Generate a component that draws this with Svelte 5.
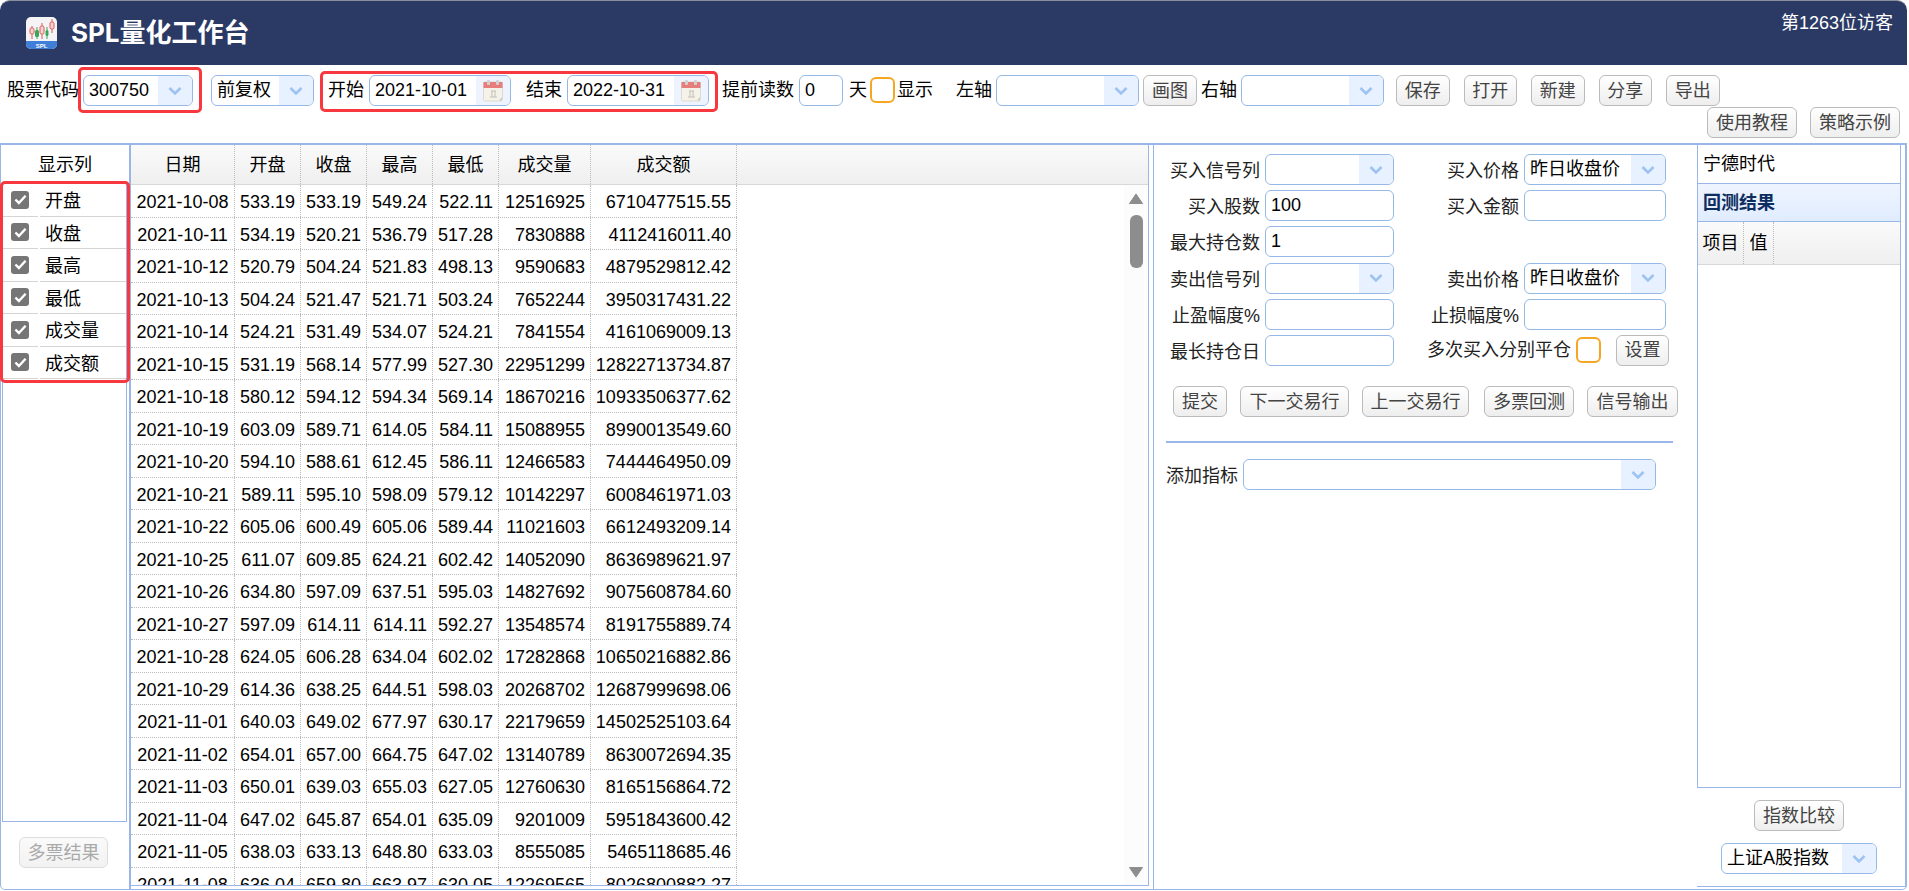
<script>
  const rows = [
    ['2021-10-08','533.19','533.19','549.24','522.11','12516925','6710477515.55'],
    ['2021-10-11','534.19','520.21','536.79','517.28','7830888','4112416011.40'],
    ['2021-10-12','520.79','504.24','521.83','498.13','9590683','4879529812.42'],
    ['2021-10-13','504.24','521.47','521.71','503.24','7652244','3950317431.22'],
    ['2021-10-14','524.21','531.49','534.07','524.21','7841554','4161069009.13'],
    ['2021-10-15','531.19','568.14','577.99','527.30','22951299','12822713734.87'],
    ['2021-10-18','580.12','594.12','594.34','569.14','18670216','10933506377.62'],
    ['2021-10-19','603.09','589.71','614.05','584.11','15088955','8990013549.60'],
    ['2021-10-20','594.10','588.61','612.45','586.11','12466583','7444464950.09'],
    ['2021-10-21','589.11','595.10','598.09','579.12','10142297','6008461971.03'],
    ['2021-10-22','605.06','600.49','605.06','589.44','11021603','6612493209.14'],
    ['2021-10-25','611.07','609.85','624.21','602.42','14052090','8636989621.97'],
    ['2021-10-26','634.80','597.09','637.51','595.03','14827692','9075608784.60'],
    ['2021-10-27','597.09','614.11','614.11','592.27','13548574','8191755889.74'],
    ['2021-10-28','624.05','606.28','634.04','602.02','17282868','10650216882.86'],
    ['2021-10-29','614.36','638.25','644.51','598.03','20268702','12687999698.06'],
    ['2021-11-01','640.03','649.02','677.97','630.17','22179659','14502525103.64'],
    ['2021-11-02','654.01','657.00','664.75','647.02','13140789','8630072694.35'],
    ['2021-11-03','650.01','639.03','655.03','627.05','12760630','8165156864.72'],
    ['2021-11-04','647.02','645.87','654.01','635.09','9201009','5951843600.42'],
    ['2021-11-05','638.03','633.13','648.80','633.03','8555085','5465118685.46'],
    ['2021-11-08','636.04','659.80','663.97','630.05','12269565','8026800882.27'],
  ];
  const heads = ['日期','开盘','收盘','最高','最低','成交量','成交额'];
  const cols = ['开盘','收盘','最高','最低','成交量','成交额'];
</script>

{#snippet arrow()}
  <span class="arrow"><svg width="16" height="10" viewBox="0 0 16 10"><path d="M2.5 2 L8 7.5 L13.5 2" fill="none" stroke="#9cc3f2" stroke-width="2.6"/></svg></span>
{/snippet}

{#snippet cal()}
  <span class="arrow cal"><svg width="20" height="22" viewBox="0 0 20 22">
    <rect x="0.5" y="2" width="19" height="19" rx="1.5" fill="#f5f2ea" stroke="#dedad0"/>
    <rect x="0.5" y="2" width="19" height="6" fill="#e67f7c"/>
    <rect x="4" y="0" width="3" height="5" rx="1" fill="#d2d2d2"/>
    <rect x="13" y="0" width="3" height="5" rx="1" fill="#d2d2d2"/>
    <path d="M8 11h5M9 11v6M12 11v6M7 17h7" stroke="#c4c0b8" stroke-width="1" fill="none"/>
    <path d="M19 17l-3 3.5h3z" fill="#cfcbc2"/>
  </svg></span>
{/snippet}

{#snippet check()}
  <span class="cb"><svg width="13" height="11" viewBox="0 0 12 10"><path d="M1.3 5 L4.5 8.2 L10.7 1.5" fill="none" stroke="#fff" stroke-width="2.2"/></svg></span>
{/snippet}

<div class="page">
  <header class="top">
    <svg class="logo" width="31" height="32" viewBox="0 0 31 32">
      <rect width="31" height="32" rx="5" fill="#f4f4f6"/>
      <path d="M0 24h31v3a5 5 0 0 1-5 5H5a5 5 0 0 1-5-5z" fill="#3f7fd8"/>
      <path d="M6 9v13M16 6v16M26 2v14" stroke="#e05656" stroke-width="1"/>
      <path d="M11 10v12M21 10v12" stroke="#37a85a" stroke-width="1"/>
      <rect x="4" y="11" width="4" height="6" rx="1.5" fill="#f7d4d4" stroke="#e05656"/>
      <rect x="9" y="13" width="4" height="7" rx="1.5" fill="#37a85a"/>
      <rect x="14" y="9" width="4" height="8" rx="1.5" fill="#f7d4d4" stroke="#e05656"/>
      <rect x="19.5" y="13" width="3" height="6" rx="1.5" fill="#37a85a"/>
      <rect x="24" y="5" width="4" height="7" rx="1.5" fill="#f7d4d4" stroke="#e05656"/>
      <text x="15.5" y="30.5" font-size="6" font-weight="700" fill="#fff" text-anchor="middle" font-family="Liberation Sans">SPL</text>
    </svg>
    <h1>SPL量化工作台</h1>
    <span class="visitor">第1263位访客</span>
  </header>

  <div class="bar">
    <div class="row">
      <span class="l l-code">股票代码</span>
      <div class="in code"><span class="v">300750</span>{@render arrow()}</div>
      <div class="in adj"><span class="v low">前复权</span>{@render arrow()}</div>
      <span class="l l-start">开始</span>
      <div class="in date"><span class="v">2021-10-01</span>{@render cal()}</div>
      <span class="l l-end">结束</span>
      <div class="in date"><span class="v">2022-10-31</span>{@render cal()}</div>
      <span class="l l-read">提前读数</span>
      <div class="in days"><span class="v">0</span></div>
      <span class="l l-day">天</span>
      <span class="sq sq-show"></span>
      <span class="l l-show">显示</span>
      <span class="l l-left">左轴</span>
      <div class="in axis"><span class="v"></span>{@render arrow()}</div>
      <button class="b-draw">画图</button>
      <span class="l l-right">右轴</span>
      <div class="in axis"><span class="v"></span>{@render arrow()}</div>
      <button class="b-tool b-first">保存</button>
      <button class="b-tool">打开</button>
      <button class="b-tool">新建</button>
      <button class="b-tool">分享</button>
      <button class="b-tool">导出</button>
    </div>
    <div class="row r2">
      <button class="b-four">使用教程</button>
      <button class="b-four b-gap">策略示例</button>
    </div>
  </div>

  <main class="main">
    <aside class="left">
      <div class="lhead">显示列</div>
      <div class="llist">
        {#each cols as c}
          <div class="lrow">{@render check()}<span class="lname">{c}</span></div>
        {/each}
      </div>
      <div class="lfoot"><button class="dis">多票结果</button></div>
    </aside>

    <section class="grid">
      <div class="ghead">
        {#each heads as h, i}<div class="c c{i}">{h}</div>{/each}
      </div>
      <div class="gbody">
        {#each rows as r}
          <div class="grow">
            {#each r as v, i}<div class="c c{i}">{v}</div>{/each}
          </div>
        {/each}
        <div class="sb">
          <svg class="up" width="14" height="11" viewBox="0 0 14 11"><path d="M7 1 L13.5 10.5 H0.5 Z" fill="#8d8d8d" stroke="#8d8d8d" stroke-linejoin="round"/></svg>
          <div class="thumb"></div>
          <svg class="down" width="14" height="11" viewBox="0 0 14 11"><path d="M7 10 L13.5 .5 H0.5 Z" fill="#8d8d8d" stroke="#8d8d8d" stroke-linejoin="round"/></svg>
        </div>
      </div>
    </section>

    <section class="form">
      <div class="frow">
        <span class="fl">买入信号列</span><div class="in w1"><span class="v"></span>{@render arrow()}</div>
        <span class="fr">买入价格</span><div class="in w2"><span class="v">昨日收盘价</span>{@render arrow()}</div>
      </div>
      <div class="frow">
        <span class="fl">买入股数</span><div class="in w1"><span class="v">100</span></div>
        <span class="fr">买入金额</span><div class="in w2"><span class="v"></span></div>
      </div>
      <div class="frow">
        <span class="fl">最大持仓数</span><div class="in w1"><span class="v">1</span></div>
      </div>
      <div class="frow">
        <span class="fl">卖出信号列</span><div class="in w1"><span class="v"></span>{@render arrow()}</div>
        <span class="fr">卖出价格</span><div class="in w2"><span class="v">昨日收盘价</span>{@render arrow()}</div>
      </div>
      <div class="frow">
        <span class="fl">止盈幅度%</span><div class="in w1"><span class="v"></span></div>
        <span class="fr">止损幅度%</span><div class="in w2"><span class="v"></span></div>
      </div>
      <div class="frow">
        <span class="fl">最长持仓日</span><div class="in w1"><span class="v"></span></div>
        <span class="multi">多次买入分别平仓</span><span class="sq sq-multi"></span>
        <button class="b-set">设置</button>
      </div>
      <div class="acts">
        <button class="a1">提交</button>
        <button class="a2">下一交易行</button>
        <button class="a3">上一交易行</button>
        <button class="a4">多票回测</button>
        <button class="a5">信号输出</button>
      </div>
      <hr />
      <div class="add">
        <span class="addl">添加指标</span>
        <div class="in addin"><span class="v"></span>{@render arrow()}</div>
      </div>
    </section>

    <aside class="right">
      <div class="rbox">
        <div class="rname">宁德时代</div>
        <div class="rtitle">回测结果</div>
        <div class="rhead"><div class="rc1">项目</div><div class="rc2">值</div></div>
      </div>
      <div class="rfoot">
        <button class="b-four">指数比较</button>
        <div class="in index"><span class="v">上证A股指数</span>{@render arrow()}</div>
      </div>
    </aside>
  </main>

  <div class="mark m1"></div>
  <div class="mark m2"></div>
  <div class="mark m3"></div>
</div>

<style>
  :global(body) { margin: 0; background: #fff; }
  .page {
    position: relative; width: 1907px; height: 890px;
    font: 18px/1 "Liberation Sans", "Noto Sans CJK SC", sans-serif; color: #000; overflow: hidden;
  }
  .top {
    height: 65px; background: #2b3a65; border-radius: 10px 10px 0 0; border-top: 1px solid #8b8f9c;
    box-sizing: border-box; display: flex; align-items: center; padding-left: 26px; position: relative;
  }
  .logo { flex: none; }
  h1 { margin: 0 0 0 14px; font: 700 26px/1 "Inter", "Noto Sans CJK SC", sans-serif; color: #fff; }
  .visitor { position: absolute; right: 14px; top: 13px; color: #fff; }

  .bar { height: 78px; box-sizing: border-box; padding: 10px 7px 0 7px; }
  .row { display: flex; align-items: flex-start; height: 32px; }
  .r2 { justify-content: flex-end; height: 31px; }
  .l { flex: none; line-height: 31px; white-space: nowrap; }
  .l-code { width: 71px; }
  .code { margin-left: 5px; width: 110px; }
  .adj { margin-left: 18px; width: 103px; }
  .low { line-height: 31px; }
  .l-start { margin-left: 14px; width: 36px; }
  .date { margin-left: 5px; width: 142px; }
  .l-end { margin-left: 15px; width: 36px; }
  .l-read { margin-left: 13px; width: 72px; }
  .days { margin-left: 5px; width: 44px; }
  .l-day { margin-left: 6px; width: 18px; }
  .sq-show { margin-left: 3px; }
  .l-show { margin-left: 2px; width: 36px; }
  .l-left { margin-left: 23px; width: 36px; }
  .axis { margin-left: 4px; width: 143px; }
  .b-draw { margin-left: 4px; width: 54px; }
  .l-right { margin-left: 4px; width: 36px; }
  .b-tool { margin-left: 14px; width: 53.5px; }
  .b-first { margin-left: 12px; }
  .b-four { width: 90px; }
  .b-gap { margin-left: 13px; }

  .in {
    flex: none; height: 31px; box-sizing: border-box; border: 1px solid #95b8e7; border-radius: 6px;
    display: flex; align-items: stretch; overflow: hidden; background: #fff;
  }
  .v { flex: 1; padding-left: 5px; line-height: 29px; white-space: nowrap; overflow: hidden; }
  .arrow { flex: none; width: 34px; background: #e8f1ff; display: flex; align-items: center; justify-content: center; }
  .cal { background: #eef4ff; }
  .sq { flex: none; width: 25px; height: 26px; box-sizing: border-box; border: 2px solid #f5a623; border-radius: 6px; margin-top: 2px; }

  button {
    flex: none; height: 31px; padding: 0; box-sizing: border-box; border: 1px solid #bbb; border-radius: 6px;
    background: linear-gradient(#ffffff, #eeeeee); color: #444;
    font: 18px/1 "Liberation Sans", "Noto Sans CJK SC", sans-serif;
  }
  .dis { width: 89px; color: #aaa; border-color: #ddd; background: linear-gradient(#fafafa, #f2f2f2); }

  .main {
    height: 747px; box-sizing: border-box; border: solid #9ab6e8; border-width: 2px 1px 1px 1px; border-radius: 0 0 5px 5px;
    display: flex;
  }
  .left { width: 128px; flex: none; border-right: 2px solid #9ab6e8; display: flex; flex-direction: column; }
  .lhead { height: 39px; line-height: 40px; text-align: center; }
  .llist { height: 638px; box-sizing: border-box; margin-left: 1px; width: 125px; border: 1px solid #9ab6e8; border-top: 0; }
  .lrow { height: 32.5px; display: flex; align-items: center; border-bottom: 1px solid #d4d4d4; box-sizing: border-box; position: relative; }
  .lrow::after { content: ""; position: absolute; left: 35px; bottom: -1px; width: 2px; height: 1px; background: #fff; }
  .cb { flex: none; width: 18px; height: 18px; margin-left: 8px; background: #767676; border-radius: 3px; display: flex; align-items: center; justify-content: center; }
  .lname { margin: 3px 0 0 16px; line-height: 1; }
  .lfoot { padding: 15px 0 0 18px; }

  .grid { width: 1017px; flex: none; border: solid #9ab6e8; border-width: 0 1px 1px 0; height: 740px; display: flex; flex-direction: column; overflow: hidden; }
  .ghead { height: 40px; flex: none; display: flex; background: linear-gradient(#fafafa, #efefef); border-bottom: 1px solid #d8d8d8; box-sizing: border-box; }
  .ghead .c { text-align: center; line-height: 41px; }
  .gbody { position: relative; flex: 1; overflow: hidden; }
  .grow { display: flex; width: fit-content; height: 32.5px; box-sizing: border-box; border-bottom: 1px dotted #bbb; }
  .grow .c { text-align: right; line-height: 35px; padding-right: 5px; }
  .grow .c0 { text-align: center; padding-right: 0; }
  .c { flex: none; border-right: 1px dotted #bbb; box-sizing: border-box; white-space: nowrap; overflow: hidden; }
  .c0 { width: 104px; }
  .c1, .c2, .c3, .c4 { width: 66px; }
  .c5 { width: 92px; }
  .c6 { width: 146px; }

  .sb { position: absolute; right: 0; top: 0; bottom: 0; width: 24px; background: #fcfcfc; }
  .up { position: absolute; left: 5px; top: 8px; }
  .thumb { position: absolute; left: 6px; top: 30px; width: 13px; height: 53px; background: #8d8d8d; border-radius: 6px; }
  .down { position: absolute; left: 5px; bottom: 7px; }

  .form { width: 544px; flex: none; margin-left: 4px; border-left: 1px solid #9ab6e8; box-sizing: border-box; padding-top: 9px; }
  .frow { display: flex; align-items: flex-start; height: 36.2px; }
  .fl { width: 106px; flex: none; text-align: right; line-height: 34px; white-space: nowrap; margin-right: 5px; color: #222; }
  .w1 { width: 129px; }
  .w2 { width: 142px; }
  .fr { width: 125px; flex: none; text-align: right; line-height: 34px; margin-right: 5px; color: #222; white-space: nowrap; }
  .multi { margin-left: 33px; width: 143px; flex: none; line-height: 31px; white-space: nowrap; color: #222; }
  .sq-multi { margin-left: 6px; }
  .b-set { margin-left: 15px; width: 53px; }
  .acts { padding: 15px 0 0 19px; display: flex; }
  .a1 { width: 54px; }
  .a2 { margin-left: 13px; width: 109px; }
  .a3 { margin-left: 13px; width: 107px; }
  .a4 { margin-left: 15px; width: 90px; }
  .a5 { margin-left: 13px; width: 91px; }
  hr { margin: 24px 0 0 12px; width: 507px; border: 0; border-top: 2px solid #9ab6e8; }
  .add { display: flex; margin: 16px 0 0 12px; }
  .addl { line-height: 34px; color: #222; }
  .addin { margin-left: 5px; width: 413px; }

  .right { flex: 1; height: 742px; box-sizing: border-box; border: solid #9ab6e8; border-width: 0 1px 1px 0; display: flex; flex-direction: column; }
  .rbox { width: 204px; height: 643px; box-sizing: border-box; border: 1px solid #9ab6e8; border-top: 0; }
  .rname { height: 39px; line-height: 38px; padding-left: 5px; border-bottom: 1px solid #9ab6e8; box-sizing: border-box; }
  .rtitle { height: 38px; line-height: 38px; padding-left: 5px; font-weight: 700; color: #0e2d5f; background: linear-gradient(#eff5ff, #e0ecff); border-bottom: 1px solid #95b8e7; box-sizing: border-box; }
  .rhead { display: flex; height: 43px; background: linear-gradient(#fafafa, #efefef); border-bottom: 1px solid #d8d8d8; box-sizing: border-box; }
  .rc1 { width: 46px; text-align: center; line-height: 43px; border-right: 1px dotted #bbb; box-sizing: border-box; }
  .rc2 { width: 30px; text-align: center; line-height: 43px; border-right: 1px dotted #bbb; box-sizing: border-box; }
  .rfoot { width: 204px; display: flex; flex-direction: column; align-items: center; padding-top: 12px; }
  .index { width: 156px; margin-top: 12px; }

  .mark { position: absolute; border: 3px solid #f8383f; border-radius: 5px; box-sizing: border-box; }
  .m1 { left: 78px; top: 67px; width: 124px; height: 46px; }
  .m2 { left: 320px; top: 71px; width: 398px; height: 41px; }
  .m3 { left: 0; top: 181px; width: 130px; height: 202px; }
</style>
